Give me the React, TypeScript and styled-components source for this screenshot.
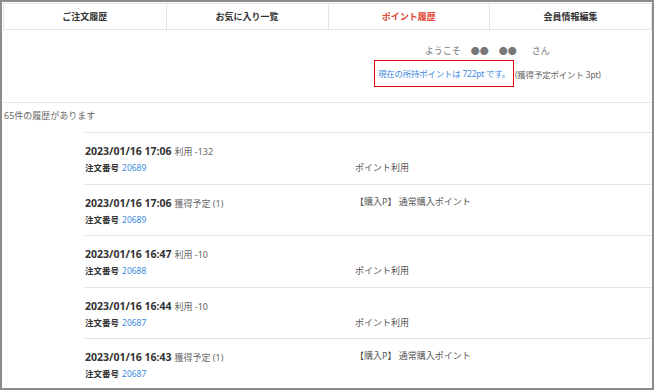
import React from "react";
import styled, { createGlobalStyle } from "styled-components";

const GlobalStyle = createGlobalStyle`
    html, body {
        margin: 0;
        padding: 0;
        background: #fff;
    }
    body {
        font-family: "Noto Sans", "Noto Sans CJK JP", sans-serif;
        color: #333;
    }
`;

const Frame = styled.div`
    box-sizing: border-box;
    width: 654px;
    height: 390px;
    border: 2px solid #8c8c8c;
    padding: 1px 0 0 1px;
    overflow: hidden;
    background: #fff;
`;

const Nav = styled.nav`
    display: grid;
    grid-template-columns: repeat(4, 1fr);
    height: 27px;
    box-sizing: border-box;
    border: 1px solid #e4e4e4;
`;

const Tab = styled.div<{ $active?: boolean; $first?: boolean }>`
    display: flex;
    align-items: center;
    justify-content: center;
    border-left: ${(p) => (p.$first ? "none" : "1px solid #e4e4e4")};
    font-size: 9px;
    font-weight: 700;
    color: ${(p) => (p.$active ? "#e2452f" : "#333")};
`;

const Greeting = styled.div`
    width: fit-content;
    margin: 15px 0 0 371px;
    text-align: center;
    padding-bottom: 15px;
`;

const Welcome = styled.div`
    font-size: 9px;
    line-height: 12px;
    color: #777;
    margin-bottom: 3px;
`;

const Gap = styled.span<{ $w: number }>`
    display: inline-block;
    width: ${(p) => p.$w}px;
`;

const PointsLine = styled.div`
    display: flex;
    align-items: center;
    font-size: 8.5px;
    letter-spacing: -0.2px;
    color: #666;
`;

const PointsBox = styled.span`
    display: inline-block;
    border: 1px solid #e60012;
    padding: 6px 3px;
    line-height: 13px;
    letter-spacing: -0.25px;
    color: #3a8be0;
    margin-right: 1px;
`;

const Divider = styled.div`
    border-top: 1px solid #e4e4e4;
`;

const Count = styled.div`
    font-size: 9px;
    line-height: 12px;
    color: #666;
    padding: 7px 0 0 1px;
    margin-bottom: 10px;
`;

const List = styled.div`
    margin-left: 82px;
`;

const Row = styled.div`
    display: grid;
    grid-template-columns: 270px 1fr;
    border-top: 1px solid #e2e2e2;
    padding: 10px 0 9px;
    height: 51.5px;
    box-sizing: border-box;
`;

const Info = styled.div`
    display: flex;
    flex-direction: column;
`;

const DateLine = styled.div`
    line-height: 16px;
    font-size: 10.5px;
    font-weight: 700;
    color: #333;
`;

const Kind = styled.span`
    font-size: 9px;
    font-weight: 400;
    color: #666;
    margin-left: 3px;
`;

const OrderLine = styled.div`
    line-height: 16px;
    font-size: 8.5px;
    font-weight: 700;
    color: #333;
`;

const OrderNo = styled.span`
    font-weight: 400;
    color: #3a8be0;
    margin-left: 3px;
`;

const Desc = styled.div<{ $low?: boolean }>`
    font-size: 9px;
    line-height: 14px;
    color: #555;
    padding-top: ${(p) => (p.$low ? "18px" : "0")};
`;

type Entry = {
    date: string;
    kind: string;
    amount: string;
    order: string;
    desc: string;
    use: boolean;
};

const entries: Entry[] = [
    { date: "2023/01/16 17:06", kind: "利用", amount: "-132", order: "20689", desc: "ポイント利用", use: true },
    { date: "2023/01/16 17:06", kind: "獲得予定", amount: "(1)", order: "20689", desc: "【購入P】 通常購入ポイント", use: false },
    { date: "2023/01/16 16:47", kind: "利用", amount: "-10", order: "20688", desc: "ポイント利用", use: true },
    { date: "2023/01/16 16:44", kind: "利用", amount: "-10", order: "20687", desc: "ポイント利用", use: true },
    { date: "2023/01/16 16:43", kind: "獲得予定", amount: "(1)", order: "20687", desc: "【購入P】 通常購入ポイント", use: false },
];

const tabs = ["ご注文履歴", "お気に入り一覧", "ポイント履歴", "会員情報編集"];

export default function App() {
    return (
        <>
            <GlobalStyle />
            <Frame>
                <Nav>
                    {tabs.map((t, i) => (
                        <Tab key={t} $first={i === 0} $active={i === 2}>
                            {t}
                        </Tab>
                    ))}
                </Nav>
                <Greeting>
                    <Welcome>
                        ようこそ<Gap $w={10} />●●<Gap $w={10} />●●<Gap $w={15} />さん
                    </Welcome>
                    <PointsLine>
                        <PointsBox>現在の所持ポイントは 722pt です。</PointsBox>
                        (獲得予定ポイント 3pt)
                    </PointsLine>
                </Greeting>
                <Divider />
                <Count>65件の履歴があります</Count>
                <List>
                    {entries.map((e, i) => (
                        <Row key={i}>
                            <Info>
                                <DateLine>
                                    {e.date}
                                    <Kind>
                                        {e.kind} {e.amount}
                                    </Kind>
                                </DateLine>
                                <OrderLine>
                                    注文番号<OrderNo>{e.order}</OrderNo>
                                </OrderLine>
                            </Info>
                            <Desc $low={e.use}>{e.desc}</Desc>
                        </Row>
                    ))}
                </List>
            </Frame>
        </>
    );
}
